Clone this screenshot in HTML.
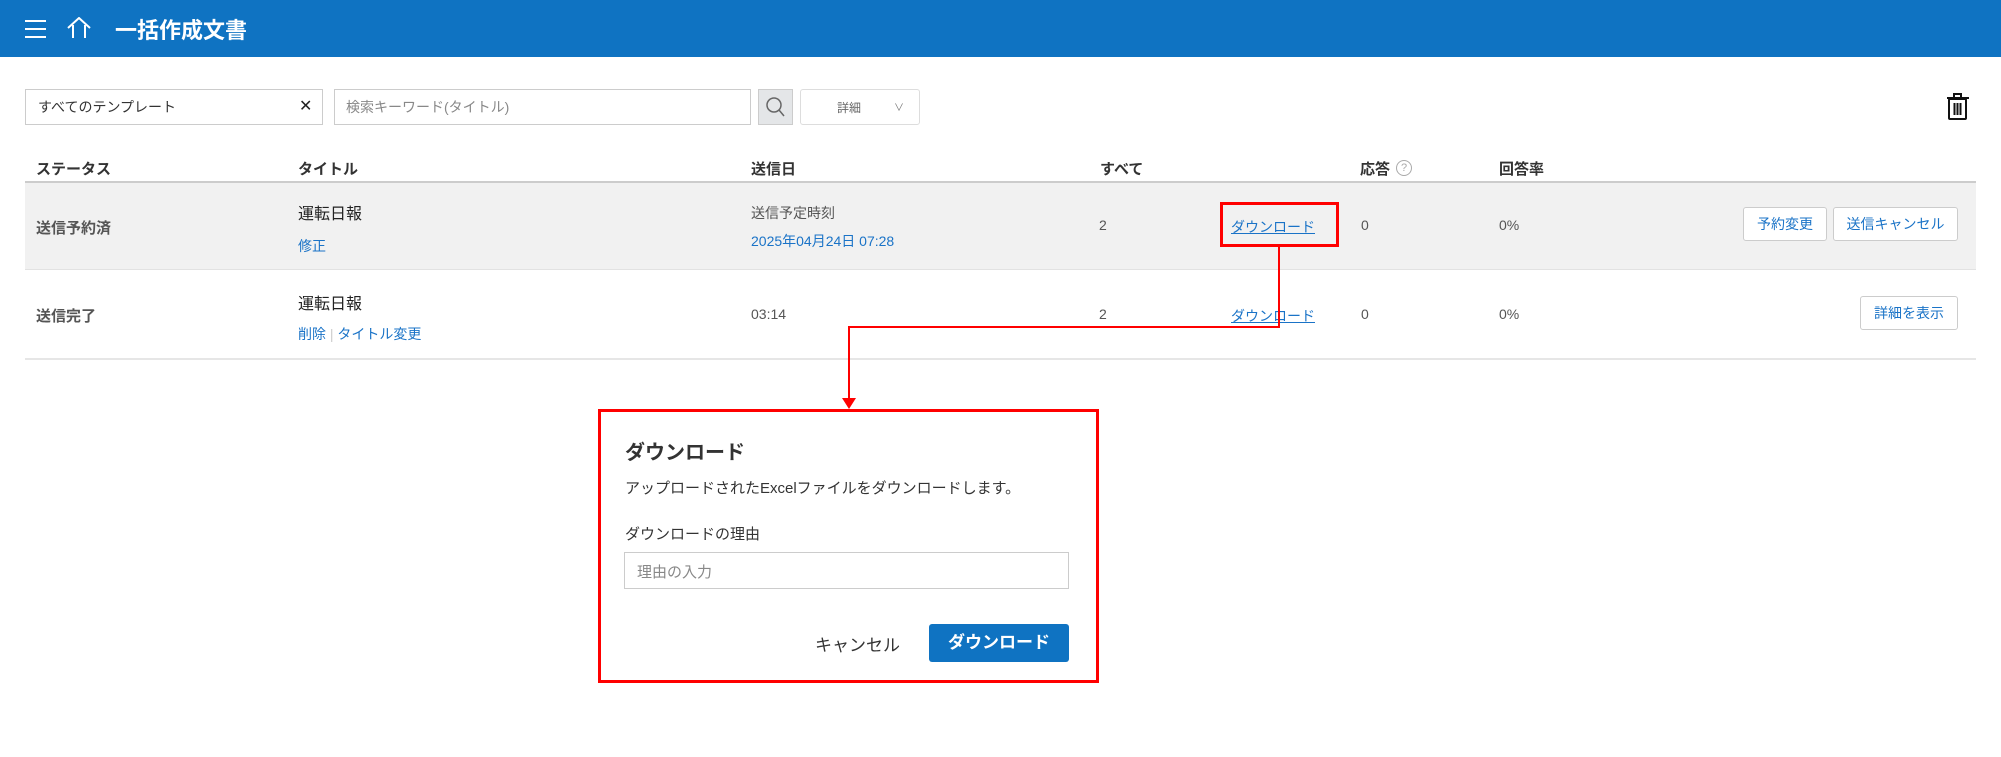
<!DOCTYPE html>
<html><head><meta charset="utf-8">
<style>
*{margin:0;padding:0;box-sizing:border-box}
body{width:2001px;height:757px;background:#fff;position:relative;overflow:hidden;font-family:"Liberation Sans","Noto Sans CJK JP",sans-serif;color:#333;font-size:15px}
.a{position:absolute;white-space:nowrap}
.hdr{position:absolute;left:0;top:0;width:2001px;height:57px;background:#0f73c2}
.link{color:#1a73c7}
.btn{position:absolute;border:1px solid #ccc;border-radius:3px;background:#fff;color:#1a73c7;font-size:14px;display:flex;align-items:center;justify-content:center}
.th{font-weight:bold;font-size:15px;color:#333}
.red{position:absolute;background:#f00}
</style></head><body>
<div class="hdr"></div>
<svg class="a" style="left:24px;top:19px" width="24" height="20"><g stroke="#fff" stroke-width="2"><line x1="1" y1="2" x2="22" y2="2"/><line x1="1" y1="10" x2="22" y2="10"/><line x1="1" y1="18" x2="22" y2="18"/></g></svg>
<svg class="a" style="left:66px;top:17px" width="28" height="22"><path d="M2 11 L13 1 L24 11 M7 8 V21 M19 8 V21" stroke="#fff" stroke-width="2" fill="none"/></svg>
<div class="a" style="left:115px;top:13px;font-size:22px;color:#fff;font-weight:bold">一括作成文書</div>

<div class="a" style="left:25px;top:89px;width:298px;height:36px;border:1px solid #ccc"></div>
<div class="a" style="left:38px;top:97px;font-size:14px;color:#333">すべてのテンプレート</div>
<div class="a" style="left:299px;top:96px;font-size:16px;color:#222">✕</div>
<div class="a" style="left:334px;top:89px;width:417px;height:36px;border:1px solid #ccc"></div>
<div class="a" style="left:346px;top:97px;font-size:14px;color:#888">検索キーワード(タイトル)</div>
<div class="a" style="left:758px;top:89px;width:35px;height:36px;background:#e4e6e8;border:1px solid #ccc"></div>
<svg class="a" style="left:765px;top:96px" width="22" height="22"><circle cx="9" cy="9" r="7" stroke="#666" stroke-width="1.5" fill="none"/><line x1="14" y1="14" x2="19" y2="20" stroke="#666" stroke-width="1.5"/></svg>
<div class="a" style="left:800px;top:89px;width:120px;height:36px;border:1px solid #ddd;border-radius:3px"></div>
<div class="a" style="left:837px;top:99px;font-size:12px;color:#666">詳細</div>
<div class="a" style="left:894px;top:99px;font-size:10px;color:#777">∨</div>
<svg class="a" style="left:1946px;top:93px" width="24" height="28"><g stroke="#111" stroke-width="2" fill="none"><rect x="3" y="6" width="17" height="20" rx="1"/><line x1="1" y1="5" x2="23" y2="5"/><rect x="8" y="1" width="7" height="4"/><line x1="8.5" y1="10" x2="8.5" y2="22"/><line x1="11.5" y1="10" x2="11.5" y2="22"/><line x1="14.5" y1="10" x2="14.5" y2="22"/></g></svg>

<div class="a th" style="left:36px;top:158px">ステータス</div>
<div class="a th" style="left:298px;top:158px">タイトル</div>
<div class="a th" style="left:751px;top:158px">送信日</div>
<div class="a th" style="left:1100px;top:158px">すべて</div>
<div class="a th" style="left:1360px;top:158px">応答</div>
<div class="a" style="left:1396px;top:160px;width:16px;height:16px;border:1px solid #aaa;border-radius:50%;font-size:11px;color:#aaa;text-align:center;line-height:14px">?</div>
<div class="a th" style="left:1499px;top:158px">回答率</div>
<div class="a" style="left:25px;top:181px;width:1951px;height:2px;background:#ccc"></div>

<div class="a" style="left:25px;top:183px;width:1951px;height:87px;background:#f1f1f1;border-bottom:1px solid #e2e2e2"></div>
<div class="a" style="left:36px;top:217px;font-weight:bold;color:#555">送信予約済</div>
<div class="a" style="left:298px;top:200px;font-size:16px;color:#222">運転日報</div>
<div class="a link" style="left:298px;top:236px;font-size:14px">修正</div>
<div class="a" style="left:751px;top:203px;font-size:14px;color:#555">送信予定時刻</div>
<div class="a link" style="left:751px;top:231px;font-size:14px">2025年04月24日 07:28</div>
<div class="a" style="left:1099px;top:217px;font-size:14px;color:#555">2</div>
<div class="a link" style="left:1231px;top:217px;font-size:14px;text-decoration:underline">ダウンロード</div>
<div class="a" style="left:1361px;top:217px;font-size:14px;color:#555">0</div>
<div class="a" style="left:1499px;top:217px;font-size:14px;color:#555">0%</div>
<div class="btn" style="left:1743px;top:207px;width:84px;height:34px">予約変更</div>
<div class="btn" style="left:1833px;top:207px;width:125px;height:34px">送信キャンセル</div>

<div class="a" style="left:36px;top:305px;font-weight:bold;color:#555">送信完了</div>
<div class="a" style="left:298px;top:290px;font-size:16px;color:#222">運転日報</div>
<div class="a link" style="left:298px;top:324px;font-size:14px">削除 <span style="color:#ccc">|</span> タイトル変更</div>
<div class="a" style="left:751px;top:306px;font-size:14px;color:#555">03:14</div>
<div class="a" style="left:1099px;top:306px;font-size:14px;color:#555">2</div>
<div class="a link" style="left:1231px;top:306px;font-size:14px;text-decoration:underline">ダウンロード</div>
<div class="a" style="left:1361px;top:306px;font-size:14px;color:#555">0</div>
<div class="a" style="left:1499px;top:306px;font-size:14px;color:#555">0%</div>
<div class="btn" style="left:1860px;top:296px;width:98px;height:34px">詳細を表示</div>
<div class="a" style="left:25px;top:358px;width:1951px;height:2px;background:#e6e6e6"></div>

<div class="a" style="left:1220px;top:202px;width:119px;height:45px;border:3px solid #f00"></div>
<div class="red" style="left:1278px;top:247px;width:2px;height:81px"></div>
<div class="red" style="left:848px;top:326px;width:432px;height:2px"></div>
<div class="red" style="left:848px;top:326px;width:2px;height:74px"></div>
<svg class="a" style="left:842px;top:398px" width="14" height="12"><path d="M0 0 L14 0 L7 11 Z" fill="#f00"/></svg>

<div class="a" style="left:598px;top:409px;width:501px;height:274px;border:3px solid #f00;background:#fff"></div>
<div class="a" style="left:625px;top:436px;font-size:20px;font-weight:bold;color:#333">ダウンロード</div>
<div class="a" style="left:625px;top:477px;font-size:15px;color:#333">アップロードされたExcelファイルをダウンロードします。</div>
<div class="a" style="left:625px;top:523px;font-size:15px;color:#333">ダウンロードの理由</div>
<div class="a" style="left:624px;top:552px;width:445px;height:37px;border:1px solid #ccc"></div>
<div class="a" style="left:637px;top:561px;font-size:15px;color:#888">理由の入力</div>
<div class="a" style="left:815px;top:631px;font-size:17px;color:#333">キャンセル</div>
<div class="a" style="left:929px;top:624px;width:140px;height:38px;background:#0f73c2;border-radius:3px;color:#fff;font-size:17px;font-weight:bold;text-align:center;line-height:38px">ダウンロード</div>
</body></html>
